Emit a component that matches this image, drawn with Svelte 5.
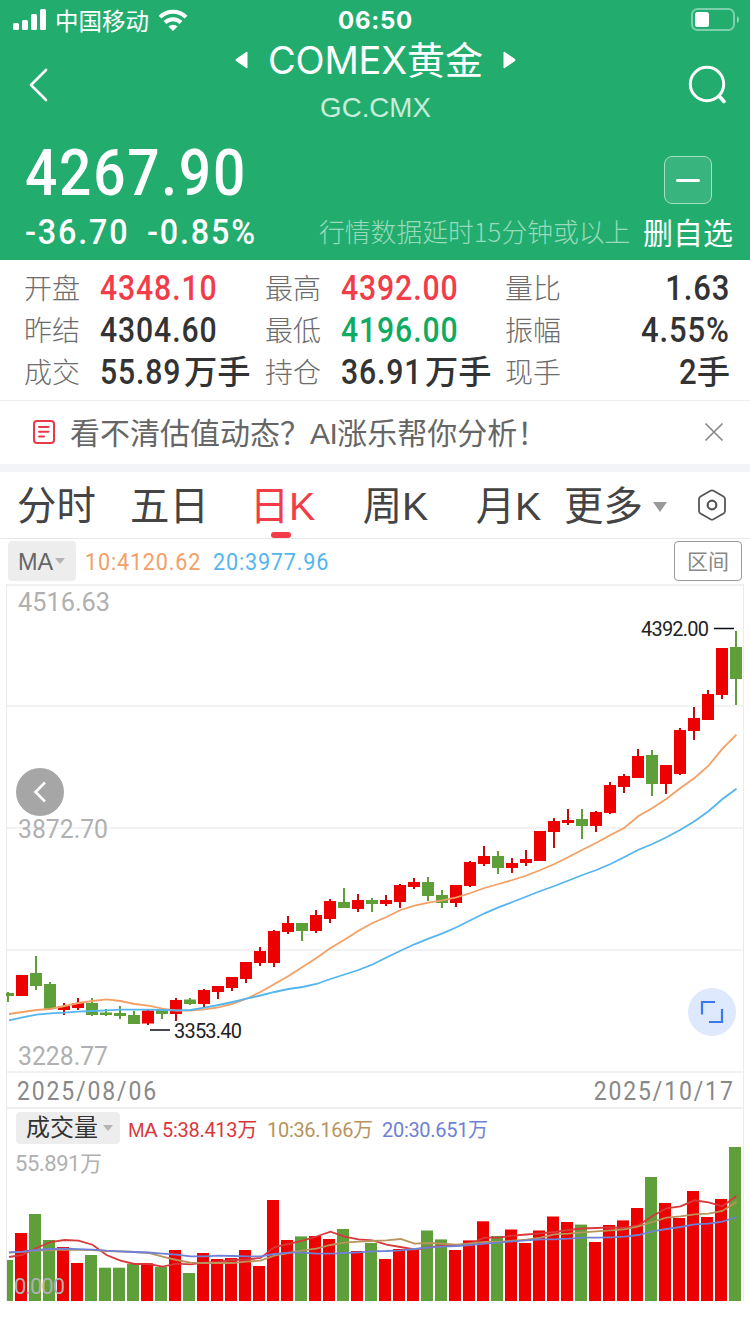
<script>
  const quotes = [
    { label: '开盘', value: '4348.10', tone: 'up' },
    { label: '最高', value: '4392.00', tone: 'up' },
    { label: '量比', value: '1.63' },
    { label: '昨结', value: '4304.60' },
    { label: '最低', value: '4196.00', tone: 'down' },
    { label: '振幅', value: '4.55%' },
    { label: '成交', value: '55.89', unit: '万手' },
    { label: '持仓', value: '36.91', unit: '万手' },
    { label: '现手', value: '2', unit: '手' },
  ];

  const tabs = ['分时', '五日', '日K', '周K', '月K'];
  let active = '日K';

  // [rising, body top, body bottom, high, low]
  const candles = [
    [0, 993, 996, 992, 1002], [1, 975, 996, 975, 996], [0, 973, 986, 956, 990], [0, 984, 1009, 982, 1009],
    [1, 1006, 1010, 1003, 1015], [1, 1003, 1008, 998, 1010], [0, 1003, 1015, 998, 1016], [0, 1012.5, 1015, 1009, 1016],
    [0, 1013, 1016, 1006, 1019], [0, 1015, 1024, 1011, 1024], [1, 1010.5, 1023.5, 1010, 1025], [0, 1010, 1014, 1009, 1019],
    [1, 1000, 1014, 998, 1021], [0, 999.5, 1004, 998, 1005], [1, 990, 1004, 989, 1007], [1, 986, 992, 986, 999],
    [1, 977, 988, 977, 991], [1, 962, 979, 962, 983], [1, 951, 963, 947, 966], [1, 931, 963, 930, 967],
    [1, 923, 932, 916, 934], [0, 923, 931, 923, 941], [1, 915, 931, 910, 933], [1, 901, 919, 899, 923],
    [0, 902, 908, 888, 908], [1, 900, 909, 894, 912], [0, 900, 904, 898, 912], [1, 900, 904, 895, 906],
    [1, 885, 902, 884, 908], [1, 882, 887, 878, 889], [0, 882, 896, 877, 901], [0, 895, 903, 890, 908],
    [1, 885, 903, 885, 907], [1, 862, 886, 861, 887], [1, 856, 864, 846, 866], [0, 856, 868, 851, 874],
    [1, 863, 868, 858, 873], [1, 859, 863, 850, 866], [1, 831, 861, 831, 861], [1, 821, 832, 818, 848],
    [1, 820, 823, 809, 825], [0, 819, 826, 809, 839], [1, 812, 826, 811, 832], [1, 785, 813, 782, 814],
    [1, 776, 787, 774, 793], [1, 756, 778, 749, 778], [0, 755, 784, 750, 796], [1, 765, 784, 765, 794],
    [1, 730, 774, 728, 775], [1, 718, 731, 707, 740], [1, 694, 720, 690, 720], [1, 648, 695, 648, 699],
    [0, 647, 679, 631, 705],
  ];

  const ma10 = [1014, 1012, 1010, 1009, 1006, 1003, 1001, 999.3, 1001, 1004, 1005.7, 1008.7, 1010.7, 1010.7, 1009.3, 1007.3,
    1004, 998.7, 992, 984, 976, 967, 958, 948, 939.7, 930.7, 923, 917, 910, 905.7, 902.7, 900.3, 897.3, 893, 888, 884, 880,
    875.5, 870, 864, 857, 849.7, 842.7, 835, 827.7, 816, 808, 798.7, 788, 778, 765.7, 748.7, 734.7];
  const ma20 = [1020.3, 1017.3, 1014.7, 1013.3, 1012.7, 1011.7, 1011, 1010.3, 1009.7, 1009.7, 1009.7, 1010, 1010.3, 1010,
    1007.7, 1005, 1002, 998.7, 995.5, 992, 989, 987, 984, 979, 974.5, 970, 964.5, 957.5, 950.7, 944.3, 938.7, 933.3, 927.3,
    920.3, 913.3, 907.3, 902, 896.5, 891, 886, 880.5, 875, 870, 864, 857, 849.7, 844, 837.3, 829.7, 821.3, 811.3, 799, 788.7];

  const volumes = [1260, 1233, 1214, 1240, 1247, 1263, 1255, 1267.7, 1267.7, 1263.7, 1263.3, 1267, 1250, 1273, 1253, 1259,
    1258, 1250, 1266, 1200, 1240, 1236.4, 1236, 1239, 1229, 1251, 1243, 1259, 1249, 1250, 1230.5, 1239.4, 1250, 1240.4,
    1221.3, 1236, 1229.5, 1243, 1230.5, 1216.5, 1222, 1224.6, 1242, 1225, 1220.4, 1208, 1177, 1203, 1218, 1191, 1217, 1199, 1147];
  const vol5 = [1257, 1255, 1248, 1242, 1240, 1240.7, 1244.7, 1255, 1260.7, 1264, 1264, 1266.7, 1263.7, 1264.3, 1262.7, 1262,
    1260, 1259.5, 1258, 1247, 1244, 1240.7, 1236.5, 1231.7, 1236.7, 1239.3, 1240.3, 1244.7, 1247, 1249.5, 1247.5, 1245.7,
    1245.7, 1243.3, 1237.7, 1237.7, 1235.7, 1234.5, 1233.3, 1232, 1230, 1228.5, 1228, 1227.3, 1228, 1225.3, 1216, 1208.3,
    1206.3, 1200.3, 1202.3, 1206.3, 1196];
  const vol10 = [1252.7, 1251.9, 1250.5, 1250, 1249.5, 1249.8, 1250, 1251, 1251.5, 1252, 1253, 1256.7, 1260, 1262.7, 1263,
    1263, 1263, 1261.7, 1260.7, 1255.7, 1253, 1250.3, 1248.7, 1245, 1242.7, 1241.7, 1241, 1240.3, 1239, 1243.7, 1243, 1243.7,
    1244.7, 1243.3, 1242, 1242, 1240.7, 1239.7, 1237.7, 1234.3, 1233.7, 1232.3, 1231.3, 1230.3, 1229.3, 1226.3, 1222, 1217.7,
    1216.3, 1214.3, 1213.7, 1211, 1201.7];
  const vol20 = [1252.3, 1251.7, 1250, 1249, 1248.7, 1249.2, 1249.7, 1250.7, 1251.3, 1252, 1252.5, 1253.7, 1254.7, 1256.3,
    1256.3, 1255.7, 1256, 1256.3, 1256.3, 1254, 1252.7, 1252.7, 1253.7, 1253.7, 1253, 1252.3, 1251.3, 1251, 1250.3, 1249,
    1247.7, 1246.7, 1246, 1245, 1243.7, 1242.7, 1241.3, 1240.3, 1239.3, 1239.3, 1238.7, 1237.7, 1237.7, 1237.3, 1236.7, 1235,
    1231.3, 1229, 1227, 1224.3, 1223.7, 1221.7, 1217];

  const line = (ys) => ys.map((y, i) => `${i ? 8.5 + i * 14 : 9},${y}`).join(' ');
  const color = (rising) => (rising ? '#ec0000' : '#5f9f3a');
</script>

<div class="page">
  <header>
    <div class="status">
      <svg class="signal" width="34" height="22" viewBox="0 0 34 22" fill="#fff">
        <rect x="0" y="14" width="6" height="7" rx="1.5" />
        <rect x="9" y="11" width="6" height="10" rx="1.5" />
        <rect x="18" y="5" width="6" height="16" rx="1.5" />
        <rect x="27" y="0" width="6" height="21" rx="1.5" />
      </svg>
      <span class="carrier">中国移动</span>
      <svg class="wifi" width="30" height="22" viewBox="0 0 30 22" fill="none" stroke="#fff" stroke-width="4">
        <path d="M2 8.2a18.5 18.5 0 0 1 26 0" />
        <path d="M7 13.5a11.5 11.5 0 0 1 16 0" />
        <path d="M10.5 17.6a6.5 6.5 0 0 1 9 0L15 22z" fill="#fff" stroke="none" />
      </svg>
      <span class="clock">06:50</span>
      <svg class="battery" width="49" height="24" viewBox="0 0 49 24" fill="none">
        <rect x="1" y="1" width="42" height="21" rx="5.5" stroke="#fff" stroke-opacity=".42" stroke-width="2" />
        <rect x="4" y="4" width="14" height="15" rx="2.5" fill="#fff" />
        <path d="M46 8v7q2-1 2-3.5t-2-3.5" fill="#fff" fill-opacity=".5" />
      </svg>
    </div>

    <div class="nav">
      <svg class="back" width="20" height="34" viewBox="0 0 20 34">
        <path d="M17 2 2 17l15 15" fill="none" stroke="#fff" stroke-width="2.6" stroke-linecap="round" stroke-linejoin="round" />
      </svg>
      <div class="title">
        <div class="name">
          <svg width="13" height="18" viewBox="0 0 13 18"><path d="M12 1v16L1 9.5v-1z" fill="#fff" stroke="#fff" stroke-linejoin="round" /></svg>
          <h1>COMEX<b>黄金</b></h1>
          <svg width="13" height="18" viewBox="0 0 13 18"><path d="M1 1v16l11-7.5v-1z" fill="#fff" stroke="#fff" stroke-linejoin="round" /></svg>
        </div>
        <p>GC.CMX</p>
      </div>
      <svg class="search" width="40" height="42" viewBox="0 0 40 42" fill="none" stroke="#fff" stroke-width="3" stroke-linecap="round">
        <circle cx="19" cy="19" r="16.7" />
        <path d="m31.5 31.5 4.5 5" stroke-width="3.6" />
      </svg>
    </div>

    <div class="last">
      <div class="price num">4267.90</div>
      <div class="minus"><i></i></div>
    </div>
    <div class="change">
      <div class="diff"><span class="num">-36.70</span></div>
      <div class="pct"><span class="num">-0.85%</span></div>
      <span class="delay">行情数据延时15分钟或以上</span>
      <span class="remove">删自选</span>
    </div>
  </header>

  <section class="quotes">
    {#each quotes as q}
      <div class="quote">
        <span class="label">{q.label}</span>
        <div class="value {q.tone || ''}">
          <span class="num" class:short={q.unit}>{q.value}</span>{#if q.unit}<b>{q.unit}</b>{/if}
        </div>
      </div>
    {/each}
  </section>

  <div class="tip">
    <svg width="24" height="26" viewBox="0 0 24 26" fill="none" stroke="#e63a4b" stroke-width="2" stroke-linecap="round">
      <rect x="2" y="2" width="20" height="22" rx="3" />
      <path d="M7 8h9.5M7 12.7h9.5M7 17.5h5" />
    </svg>
    <span>看不清估值动态？<em>AI</em>涨乐帮你分析！</span>
    <svg class="close" width="20" height="20" viewBox="0 0 20 20" stroke="#888" stroke-width="1.7">
      <path d="m1.5 1.5 17 17m0-17-17 17" />
    </svg>
  </div>

  <nav class="tabs">
    {#each tabs as tab}
      <button class:active={tab === active} on:click={() => (active = tab)}>{tab}</button>
    {/each}
    <button class="more">更多<i class="caret"></i></button>
    <svg class="gear" width="30" height="32" viewBox="0 0 30 32" fill="none" stroke="#555">
      <path d="M13.5 1.8q1.5-.8 3 0l10 5.700q1.500.9 1.500 2.500v12q0 1.600-1.500 2.500l-10 5.700q-1.500.8-3 0l-10-5.700Q2 23.600 2 22V10q0-1.600 1.500-2.500z" stroke-width="1.8" />
      <circle cx="15" cy="16" r="4.3" stroke-width="2.2" />
    </svg>
  </nav>

  <div class="indicator">
    <div class="pick">MA<i class="caret"></i></div>
    <div class="ten"><span class="num">10:4120.62</span></div>
    <div class="twenty"><span class="num">20:3977.96</span></div>
    <div class="range">区间</div>
  </div>

  <div class="chart">
    <svg width="750" height="490" viewBox="0 584 750 490">
      <g stroke="#f2f2f4" stroke-width="2">
        <path d="M6 585H744M6 706H744M6 828H744M6 950H744M6 1072H744" />
        <path d="M6.5 584V1074M743.5 584V1074" stroke="#ebebed" stroke-width="1" />
      </g>
      <g class="axis">
        <text x="18" y="611" textLength="92" lengthAdjust="spacingAndGlyphs">4516.63</text>
        <text x="18" y="838" textLength="90" lengthAdjust="spacingAndGlyphs">3872.70</text>
        <text x="18" y="1065" textLength="90" lengthAdjust="spacingAndGlyphs">3228.77</text>
      </g>
      {#each candles as [rising, top, bottom, high, low], i}
        <rect x={7 + i * 14} y={high} width="2" height={low - high} fill={rising ? '#c00c10' : '#5f9f3a'} />
        <rect x={i ? 2 + i * 14 : 6} y={top} width={i ? 12 : 8} height={bottom - top} fill={color(rising)} />
      {/each}
      <polyline points={line(ma10)} fill="none" stroke="#f3a066" stroke-width="1.8" />
      <polyline points={line(ma20)} fill="none" stroke="#55b5ee" stroke-width="1.8" />
      <path d="M150 1030h20M714 628.5h20" stroke="#0b0d14" stroke-width="1.7" />
      <g class="mark">
        <text x="174" y="1038" textLength="68">3353.40</text>
        <text x="641" y="636" textLength="68">4392.00</text>
      </g>
    </svg>
    <div class="prev">
      <svg width="14" height="22" viewBox="0 0 14 22"><path d="M12 1.5 2.5 11l9.5 9.5" fill="none" stroke="#fff" stroke-width="2.6" /></svg>
    </div>
    <div class="expand">
      <svg width="24" height="24" viewBox="0 0 24 24"><path d="M2 14.5V2h13M22 9v13H9" fill="none" stroke="#3a78f0" stroke-width="2.2" /></svg>
    </div>
  </div>

  <div class="dates"><span class="num">2025/08/06</span><span class="num end">2025/10/17</span></div>

  <div class="volume">
    <div class="legend">
      <div class="pick">成交量<i class="caret"></i></div>
      <span class="v5"><em>MA</em> 5:38.413万</span>
      <span class="v10">10:36.166万</span>
      <span class="v20">20:30.651万</span>
    </div>
    <svg width="750" height="156" viewBox="0 1146 750 156">
      {#each volumes as top, i}
        <rect x={i ? 1 + i * 14 : 6} y={top} width={i ? 12 : 7} height={1301 - top} fill={color(candles[i][0])} />
      {/each}
      <polyline points={line(vol5)} fill="none" stroke="#d8383c" stroke-width="1.8" />
      <polyline points={line(vol10)} fill="none" stroke="#b8935c" stroke-width="1.8" />
      <polyline points={line(vol20)} fill="none" stroke="#6f80d6" stroke-width="1.8" />
      <path d="M6.5 1146V1301M743.5 1146V1301" stroke="#ebebed" />
      <g class="axis small">
        <text x="15" y="1171" textLength="87">55.891万</text>
        <text x="14" y="1294" textLength="51">0.000</text>
      </g>
    </svg>
  </div>
</div>

<style>
  :global(body) {
    margin: 0;
    background: #fff;
  }

  .page {
    width: 750px;
    height: 1334px;
    overflow: hidden;
    background: #fff;
    color: #333;
    font-family: 'Liberation Sans', 'Noto Sans CJK SC', sans-serif;
    white-space: nowrap;
  }

  svg {
    display: block;
    flex: none;
  }

  h1,
  p {
    margin: 0;
  }

  b {
    font-weight: 500;
  }

  em {
    font-style: normal;
  }

  /* narrow figures with a little air between them */
  .num {
    display: inline-block;
    font-family: Roboto, sans-serif;
    transform: scaleX(.9);
    transform-origin: left;
  }

  header {
    height: 260px;
    background: #22ad6f;
    color: #fff;
  }

  .status {
    height: 40px;
    display: flex;
    align-items: center;
  }

  .signal {
    margin: -1px 0 0 13px;
  }

  .carrier {
    margin-left: 8px;
    width: 95px;
    font-size: 23.5px;
    line-height: 40px;
    font-family: 'Noto Sans CJK SC', sans-serif;
  }

  .wifi {
    margin-left: 8px;
  }

  .clock {
    margin-left: 150px;
    width: 78px;
    font: bold 24px/43px Inter, sans-serif;
    letter-spacing: .7px;
  }

  .battery {
    margin-left: auto;
    margin-right: 10px;
  }

  .nav {
    height: 90px;
    display: flex;
    justify-content: space-between;
    align-items: center;
  }

  .back {
    margin-left: 29px;
  }

  .title {
    margin-left: 14px;
    text-align: center;
  }

  .name {
    display: flex;
    align-items: center;
    gap: 20px;
    height: 40px;
  }

  h1 {
    font: 400 38px/40px Inter, 'Noto Sans CJK SC', sans-serif;
    letter-spacing: -.2px;
  }

  h1 b {
    font-weight: 400;
    letter-spacing: 0;
  }

  .title p {
    height: 50px;
    line-height: 55px;
    font-size: 27.7px;
    color: #c8ecd9;
  }

  .search {
    margin: 2px 22px 0 0;
  }

  .last {
    height: 76px;
    display: flex;
    justify-content: space-between;
  }

  .price {
    margin: 5px 0 0 25px;
    font-size: 65px;
    line-height: 77px;
    font-weight: 500;
    letter-spacing: 2px;
    transform: scaleX(.875);
  }

  .minus {
    width: 46px;
    height: 46px;
    margin: 26px 38px 0 0;
    border: 1px solid #a5dcc0;
    border-radius: 8px;
    background: #38b57e;
    display: flex;
    align-items: center;
    justify-content: center;
  }

  .minus i {
    width: 24px;
    height: 3px;
    border-radius: 2px;
    background: #fff;
  }

  .change {
    height: 54px;
    display: flex;
    line-height: 53px;
  }

  .change .num {
    font-size: 35.5px;
    font-weight: 500;
    letter-spacing: 2px;
    transform: scaleX(.91);
  }

  .diff {
    width: 122px;
    margin-left: 25px;
  }

  .pct {
    width: 172px;
  }

  .delay {
    width: 324px;
    font-size: 25.8px;
    line-height: 50px;
    font-weight: 300;
    font-family: 'Noto Sans CJK SC', sans-serif;
    color: #98dabb;
  }

  .remove {
    font-size: 30px;
    line-height: 56px;
  }

  .quotes {
    height: 141px;
    padding: 8px 20px 0 24px;
    box-sizing: border-box;
    display: grid;
    grid-template-columns: 241px 240px 225px;
    grid-auto-rows: 42px;
    border-bottom: 1px solid #ececee;
  }

  .quote {
    display: flex;
    line-height: 42px;
  }

  .quote:nth-child(3n) {
    justify-content: space-between;
  }

  .label {
    width: 76px;
    font-size: 28px;
    line-height: 43px;
    font-weight: 300;
    color: #6c6c6c;
  }

  .value {
    margin-top: -1px;
    font-weight: 500;
  }

  .value .num {
    font-size: 34.5px;
    letter-spacing: 1px;
    transform: scaleX(.875);
  }

  .value .short {
    margin-right: -9px;
  }

  .quote:nth-child(3n) .num {
    transform: scaleX(.9);
    transform-origin: right;
  }

  .quote:nth-child(3n) .short {
    margin-right: -1px;
  }

  .value b {
    font-size: 33.3px;
  }

  .up {
    color: #f23c48;
  }

  .down {
    color: #10ab62;
  }

  .tip {
    height: 61px;
    display: flex;
    align-items: center;
    padding: 0 26px 2px 32px;
    border-bottom: 8px solid #f3f4f8;
    color: #666;
    font-size: 30px;
  }

  .tip span {
    margin: -2px 0 0 14px;
  }

  .tip em {
    letter-spacing: -.5px;
  }

  .close {
    margin-left: auto;
  }

  .tabs {
    height: 67px;
    box-sizing: border-box;
    display: flex;
    align-items: center;
    border-bottom: 1px solid #e8e8ea;
  }

  button {
    position: relative;
    height: 66px;
    margin: 0;
    padding: 0;
    border: 0;
    background: none;
    color: #444;
    font: 39.4px/68px 'Liberation Sans', 'Noto Sans CJK SC', sans-serif;
    text-align: center;
    width: 113px;
  }

  .active {
    color: #f23c48;
  }

  .active::after {
    content: '';
    position: absolute;
    left: 45px;
    bottom: 0;
    width: 20px;
    height: 6px;
    border-radius: 3px;
    background: #f23c48;
  }

  .caret {
    display: inline-block;
    border: 5px solid transparent;
    border-top: 6px solid #b4b4b4;
    border-bottom: 0;
    vertical-align: middle;
  }

  .more {
    width: 104px;
    margin-left: -1px;
    text-align: left;
  }

  .more .caret {
    border-width: 10px 7px 0;
    border-top-color: #999;
    margin: -5px 0 0 10px;
  }

  .gear {
    margin-left: 29px;
  }

  .indicator {
    height: 43px;
    padding-bottom: 2px;
    display: flex;
    align-items: center;
  }

  .indicator .num {
    font-size: 24px;
    line-height: 45px;
    letter-spacing: .9px;
    transform: scaleX(.9);
    margin-top: 4px;
  }

  .pick {
    background: #ededed;
    border-radius: 4px;
    color: #666;
  }

  .indicator .pick {
    width: 58px;
    height: 40px;
    margin-left: 8px;
    padding-left: 10px;
    font-size: 23.5px;
    line-height: 43px;
  }

  .indicator .caret {
    margin: -5px 0 0 2px;
  }

  .ten {
    margin-left: 9px;
    width: 128px;
    color: #f3a066;
  }

  .twenty {
    color: #55b5ee;
  }

  .range {
    margin: 0 8px 0 auto;
    width: 66px;
    height: 38px;
    border: 1px solid #999;
    border-radius: 4px;
    text-align: center;
    font-size: 21px;
    line-height: 39px;
    color: #888;
  }

  .chart {
    position: relative;
    height: 490px;
  }

  .axis {
    font: 25.5px Roboto, 'Noto Sans CJK SC', sans-serif;
    fill: #b0b0b0;
  }

  .small {
    font-size: 22px;
  }

  .mark {
    font: 20px Roboto, sans-serif;
    fill: #222;
  }

  .prev,
  .expand {
    position: absolute;
    width: 48px;
    height: 48px;
    border-radius: 50%;
    display: flex;
    align-items: center;
    justify-content: center;
  }

  .prev {
    left: 16px;
    top: 184px;
    background: #a6a6a6;
  }

  .expand {
    left: 688px;
    top: 404px;
    background: #dfe9fd;
  }

  .dates {
    height: 33px;
    margin: 0 6px;
    padding: 0 10px;
    border: solid #ebebed;
    border-width: 0 1px;
    border-bottom: 2px solid #f0f0f2;
    display: flex;
    justify-content: space-between;
    font-size: 25.5px;
    line-height: 35px;
    letter-spacing: 2.1px;
    color: #888;
  }

  .dates .end {
    transform-origin: right;
    margin-right: -2px;
  }

  .legend {
    height: 37px;
    display: flex;
    align-items: center;
    margin: 0 6px;
    border: solid #ebebed;
    border-width: 0 1px;
    font: 20px/41px Roboto, 'Noto Sans CJK SC', sans-serif;
    letter-spacing: -.3px;
  }

  .legend .pick {
    width: 94px;
    height: 32px;
    padding-left: 10px;
    margin: 1px 8px 0 9px;
    font-size: 24px;
    line-height: 32px;
    letter-spacing: 0;
    color: #333;
  }

  .legend .caret {
    margin: -3px 0 0 5px;
  }

  .legend span {
    margin-top: 5px;
  }

  .legend em {
    font-family: 'Liberation Sans', sans-serif;
  }

  .v5 {
    width: 139px;
    color: #d8383c;
  }

  .v10 {
    width: 115px;
    color: #b8935c;
  }

  .v20 {
    color: #6f80d6;
  }
</style>
